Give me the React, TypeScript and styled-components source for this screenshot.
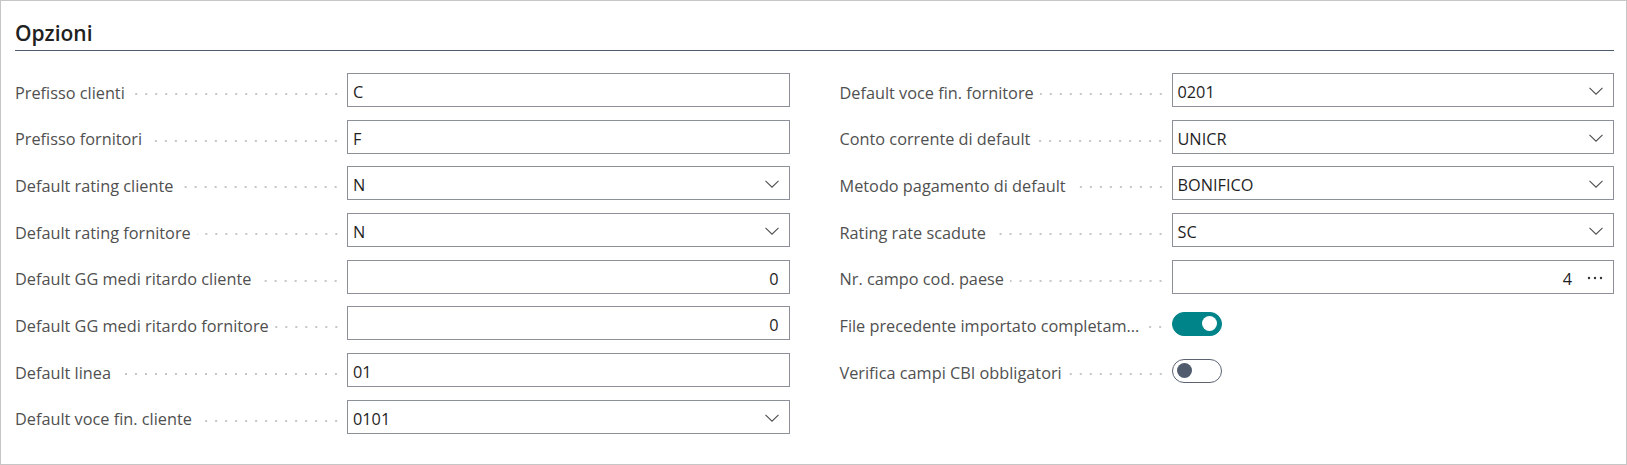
import React from "react";
import styled, { createGlobalStyle } from "styled-components";

const GlobalStyle = createGlobalStyle`
  html, body { margin: 0; padding: 0; background: #ffffff; }
  body { font-family: "Open Sans", "Noto Sans", Arial, sans-serif; }
  * { box-sizing: border-box; }
`;

const Frame = styled.div`
  width: 1627px;
  height: 465px;
  border: 1px solid #c6c6c6;
  background: #ffffff;
  padding: 0 12px 0 14px;
`;

const Heading = styled.h2`
  margin: 0;
  padding: 18px 0 3px;
  line-height: 28px;
  font-size: 21px;
  font-weight: 600;
  color: #212121;
  border-bottom: 1px solid #4e5d6c;
`;

const Columns = styled.div`
  margin-top: 22px;
  display: grid;
  grid-template-columns: 1fr 1fr;
  column-gap: 50px;
  align-items: start;
`;

const Column = styled.div`
  display: flex;
  flex-direction: column;
  gap: 12.7px;
`;

const Row = styled.div`
  display: grid;
  grid-template-columns: 332px 1fr;
  height: 34px;
`;

const LabelCell = styled.div`
  display: flex;
  align-items: center;
  padding-right: 6px;
  min-width: 0;
`;

const LabelText = styled.span`
  white-space: nowrap;
  font-size: 16.3px;
  line-height: 28px;
  padding-top: 5px;
  color: #505050;
  margin-right: 6px;
`;

const Leader = styled.span`
  flex: 1;
  height: 4px;
  margin-top: 8px;
  background-image: radial-gradient(circle, #c6c6c6 0.9px, transparent 1.3px);
  background-size: 10px 4px;
  background-repeat: repeat-x;
  background-position: right center;
`;

const Box = styled.div`
  height: 34px;
  border: 1px solid #8c9199;
  background: #ffffff;
  display: flex;
  align-items: center;
  padding: 4px 10px 0 5px;
`;

const Value = styled.span<{ $align?: "left" | "right" }>`
  flex: 1;
  font-size: 16.3px;
  line-height: 28px;
  color: #1f1f1f;
  text-align: ${(p) => (p.$align === "right" ? "right" : "left")};
  white-space: nowrap;
`;

const Icon = styled.span<{ $gap?: number }>`
  display: flex;
  align-items: center;
  margin-left: ${(p) => p.$gap ?? 8}px;
  margin-top: -2px;
`;

const ToggleCell = styled.div`
  display: flex;
  align-items: center;
  padding-top: 1px;
`;

const Toggle = styled.span<{ $on: boolean }>`
  position: relative;
  width: 50px;
  height: 24px;
  border-radius: 12px;
  background: ${(p) => (p.$on ? "#008489" : "#ffffff")};
  border: 1px solid ${(p) => (p.$on ? "#008489" : "#5b6372")};
`;

const Knob = styled.span<{ $on: boolean }>`
  position: absolute;
  top: 3.5px;
  width: 15px;
  height: 15px;
  border-radius: 50%;
  left: ${(p) => (p.$on ? "29px" : "4px")};
  background: ${(p) => (p.$on ? "#ffffff" : "#505c6d")};
`;

type Field =
  | { label: string; kind: "text" | "number" | "select" | "lookup"; value: string }
  | { label: string; kind: "toggle"; on: boolean };

const left: Field[] = [
  { label: "Prefisso clienti", kind: "text", value: "C" },
  { label: "Prefisso fornitori", kind: "text", value: "F" },
  { label: "Default rating cliente", kind: "select", value: "N" },
  { label: "Default rating fornitore", kind: "select", value: "N" },
  { label: "Default GG medi ritardo cliente", kind: "number", value: "0" },
  { label: "Default GG medi ritardo fornitore", kind: "number", value: "0" },
  { label: "Default linea", kind: "text", value: "01" },
  { label: "Default voce fin. cliente", kind: "select", value: "0101" },
];

const right: Field[] = [
  { label: "Default voce fin. fornitore", kind: "select", value: "0201" },
  { label: "Conto corrente di default", kind: "select", value: "UNICR" },
  { label: "Metodo pagamento di default", kind: "select", value: "BONIFICO" },
  { label: "Rating rate scadute", kind: "select", value: "SC" },
  { label: "Nr. campo cod. paese", kind: "lookup", value: "4" },
  { label: "File precedente importato completam...", kind: "toggle", on: true },
  { label: "Verifica campi CBI obbligatori", kind: "toggle", on: false },
];

const Chevron = () => (
  <svg width="14" height="8" viewBox="0 0 14 8" fill="none">
    <path d="M0.5 0.8 L7 7.2 L13.5 0.8" stroke="#505050" strokeWidth="1.1" />
  </svg>
);

const Dots = () => (
  <svg width="16" height="4" viewBox="0 0 16 4">
    <circle cx="2" cy="2" r="1.2" fill="#333333" />
    <circle cx="8" cy="2" r="1.2" fill="#333333" />
    <circle cx="14" cy="2" r="1.2" fill="#333333" />
  </svg>
);

const FieldRow = ({ f }: { f: Field }) => (
  <Row>
    <LabelCell>
      <LabelText>{f.label}</LabelText>
      <Leader />
    </LabelCell>
    {f.kind === "toggle" ? (
      <ToggleCell>
        <Toggle $on={f.on}>
          <Knob $on={f.on} />
        </Toggle>
      </ToggleCell>
    ) : (
      <Box>
        <Value $align={f.kind === "number" || f.kind === "lookup" ? "right" : "left"}>{f.value}</Value>
        {f.kind === "select" && (
          <Icon>
            <Chevron />
          </Icon>
        )}
        {f.kind === "lookup" && (
          <Icon $gap={15}>
            <Dots />
          </Icon>
        )}
      </Box>
    )}
  </Row>
);

export default function App() {
  return (
    <>
      <GlobalStyle />
      <Frame>
        <Heading>Opzioni</Heading>
        <Columns>
          <Column>
            {left.map((f) => (
              <FieldRow key={f.label} f={f} />
            ))}
          </Column>
          <Column>
            {right.map((f) => (
              <FieldRow key={f.label} f={f} />
            ))}
          </Column>
        </Columns>
      </Frame>
    </>
  );
}
